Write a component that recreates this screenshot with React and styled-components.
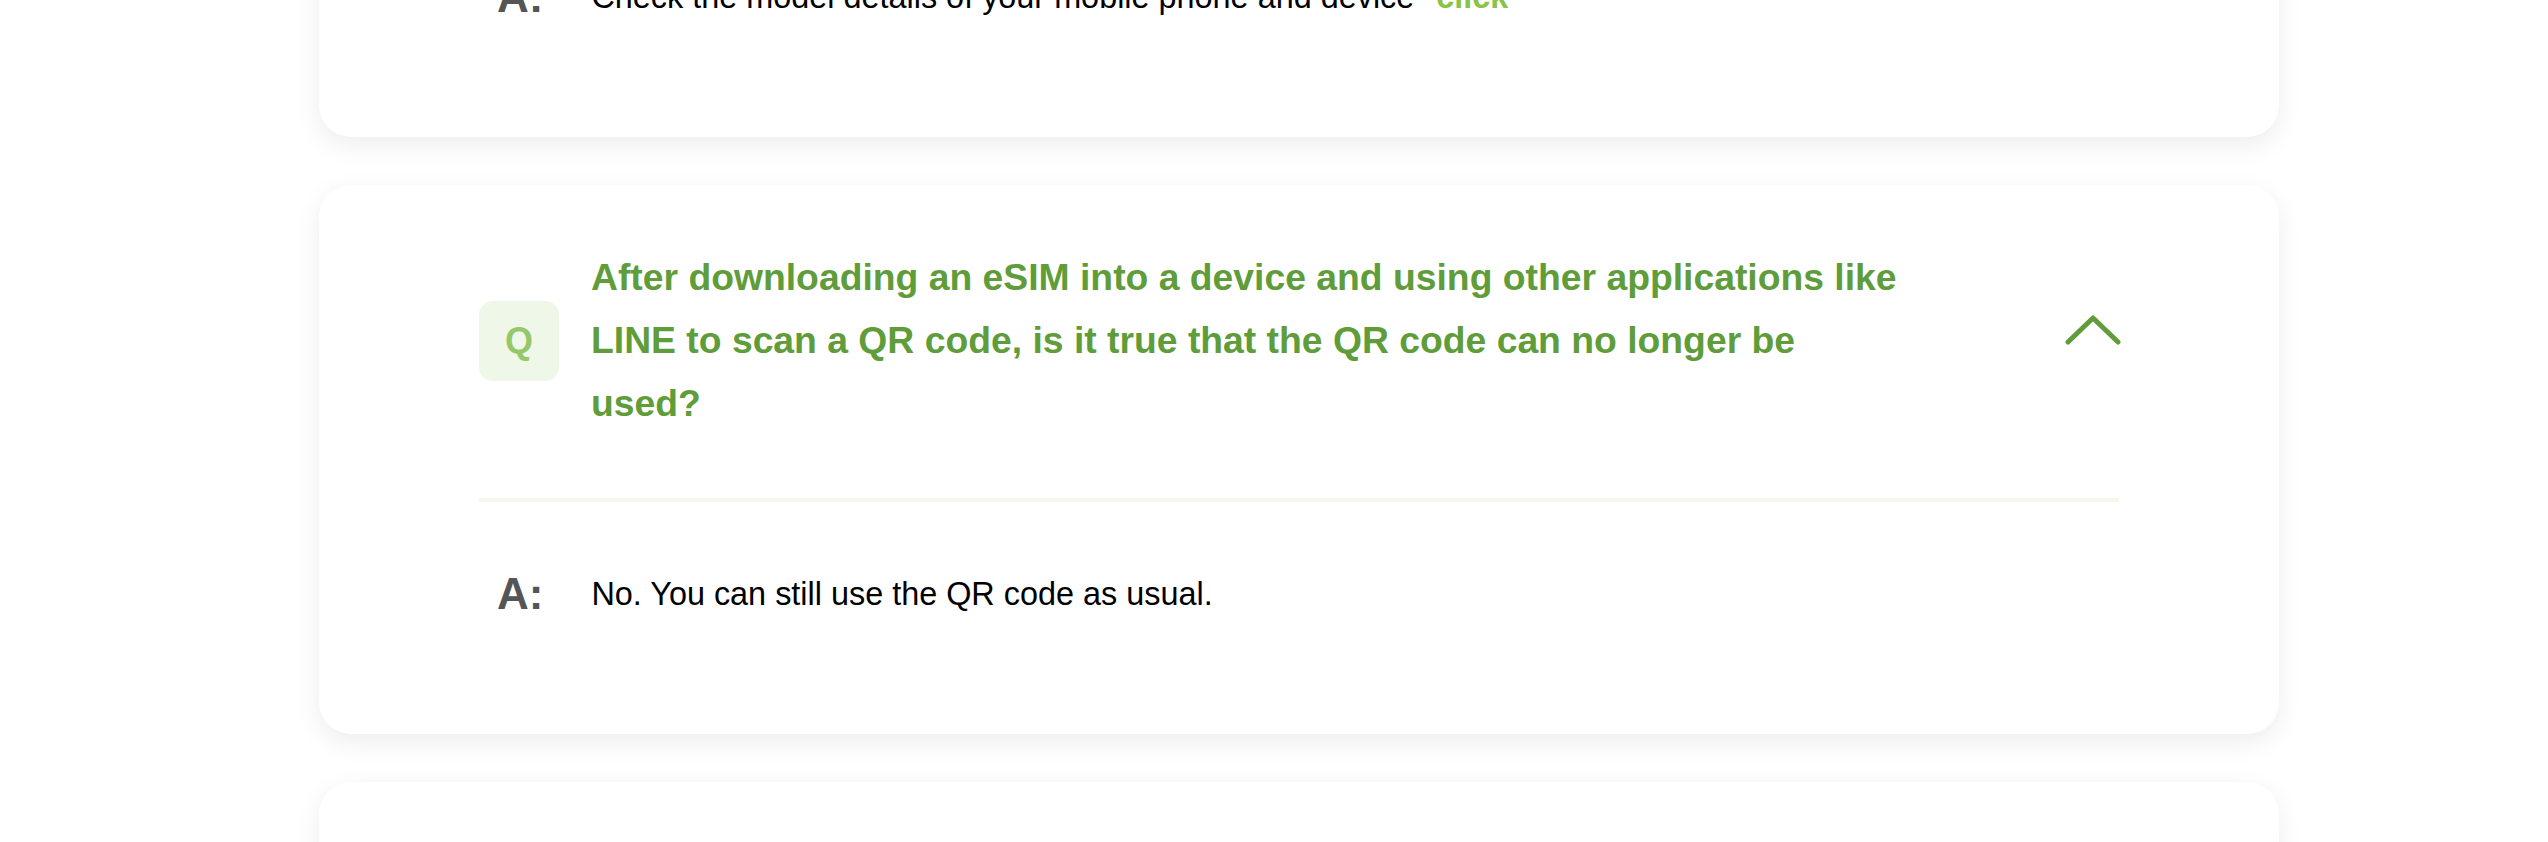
import React from 'react';
import styled, { createGlobalStyle } from 'styled-components';

const GlobalStyle = createGlobalStyle`
    html, body {
        margin: 0;
        padding: 0;
        background: #ffffff;
        font-family: "Liberation Sans", Arial, Helvetica, sans-serif;
        overflow: hidden;
    }
`;

const faqs = [
    {
        id: 1,
        question: ['Which devices are compatible with eSIM?'],
        answer: 'Check the model details of your mobile phone and device',
        link: 'click',
    },
    {
        id: 2,
        question: [
            'After downloading an eSIM into a device and using other applications like',
            'LINE to scan a QR code, is it true that the QR code can no longer be',
            'used?',
        ],
        answer: 'No. You can still use the QR code as usual.',
    },
    {
        id: 3,
        question: ['Can I use the same eSIM QR code on more than one device?'],
        answer: 'No. Each QR code can only be installed once.',
    },
];

function ChevronUp() {
    return (
        <svg width="56" height="30" viewBox="0 0 56 30" fill="none">
            <path d="M3 27 L28 3 L53 27" stroke="#5f9c3a" strokeWidth="5" strokeLinecap="round" strokeLinejoin="round" />
        </svg>
    );
}

function FaqCard({ item }) {
    return (
        <Card>
            <Header>
                <QBadge>Q</QBadge>
                <Question>
                    {item.question.map((line, i) => (
                        <React.Fragment key={i}>
                            {line}
                            {i < item.question.length - 1 && <br />}
                        </React.Fragment>
                    ))}
                </Question>
                <Toggle>
                    <ChevronUp />
                </Toggle>
            </Header>
            <Divider />
            <AnswerRow>
                <ALabel>A:</ALabel>
                <Answer>
                    {item.answer}
                    {item.link && <Link>{item.link}</Link>}
                </Answer>
            </AnswerRow>
        </Card>
    );
}

export default function App() {
    return (
        <>
            <GlobalStyle />
            <Page>
                {faqs.map((item) => (
                    <FaqCard key={item.id} item={item} />
                ))}
            </Page>
        </>
    );
}

const Page = styled.main`
    display: flex;
    flex-direction: column;
    gap: 48px;
    width: 1960px;
    margin-left: 319px;
    margin-top: -303px;
`;

const Card = styled.section`
    background: #ffffff;
    border-radius: 32px;
    box-shadow: 0 8px 26px rgba(0, 0, 0, 0.075);
    padding: 0 160px;
`;

const Header = styled.div`
    display: flex;
    align-items: center;
    gap: 32px;
    padding: 61px 0 63px;
`;

const QBadge = styled.div`
    flex: 0 0 80px;
    height: 80px;
    border-radius: 14px;
    background: #eff7e8;
    color: #96c86b;
    font-size: 36px;
    font-weight: 700;
    display: flex;
    align-items: center;
    justify-content: center;
`;

const Question = styled.h3`
    flex: 1;
    margin: 0;
    color: #5f9c3a;
    font-size: 37.3px;
    font-weight: 700;
    line-height: 63px;
    white-space: nowrap;
`;

const Toggle = styled.div`
    display: flex;
    margin-bottom: 22px;
    margin-right: -2px;
`;

const Divider = styled.hr`
    margin: 0;
    border: none;
    height: 4px;
    background: #f2f8ec;
`;

const AnswerRow = styled.div`
    display: flex;
    align-items: center;
    gap: 48px;
    padding: 62px 0 110px 18px;
    height: 60px;
`;

const ALabel = styled.span`
    color: #555555;
    font-size: 44px;
    font-weight: 700;
    line-height: 60px;
`;

const Answer = styled.p`
    margin: 0;
    color: #000000;
    font-size: 32.4px;
    line-height: 60px;
`;

const Link = styled.a`
    margin-left: 22px;
    color: #8bc34a;
    font-weight: 700;
    cursor: pointer;
`;
